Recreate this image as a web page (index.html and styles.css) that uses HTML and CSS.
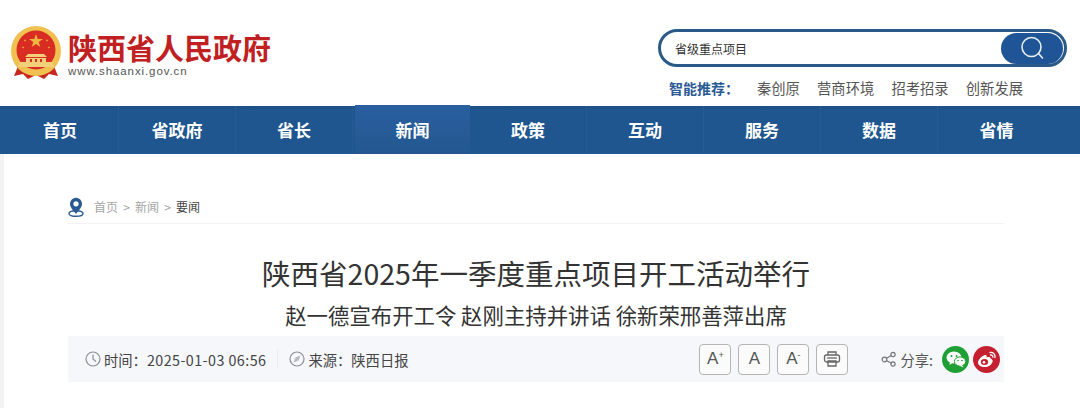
FILE: index.html
```html
<!DOCTYPE html>
<html lang="zh-CN">
<head>
    <meta charset="UTF-8">
    <title>陕西省2025年一季度重点项目开工活动举行</title>
    <link rel="stylesheet" href="styles.css">
</head>
<body>
    <header class="top">
        <div class="logo">
            <svg class="emblem" width="50" height="54" viewBox="0 0 50 54">
                <path d="M8 38 L3 50 L12 48 L17 53 L25 49 L33 53 L38 48 L47 50 L42 38 Z" fill="#c9281f"/>
                <path d="M12 42 L18 48 M25 42 V49 M38 42 L32 48" stroke="#e8b040" stroke-width="2"/>
                <circle cx="25" cy="25" r="25" fill="#f0c050"/>
                <circle cx="25" cy="24" r="19.500" fill="#d92c22"/>
                <path d="M25 8 l1.700 5 h5.300 l-4.300 3.100 1.600 5 -4.300 -3 -4.300 3 1.600 -5 -4.300 -3.100 h5.300 Z" fill="#eeb640"/>
                <path d="M14 13 l1 2.600 -2.400 -1.600 h2.900 l-2.400 1.600 Z M36 13 l1 2.600 -2.400 -1.600 h2.900 l-2.400 1.600 Z M12 20 l1 2.600 -2.400 -1.600 h2.900 l-2.400 1.600 Z M38 20 l1 2.600 -2.400 -1.600 h2.900 l-2.400 1.600 Z" fill="#eeb640"/>
                <path d="M17 28 H33 L36 31 H14 Z M15 32 H35 V36 H15 Z M9 36 H41 L43 41 H7 Z" fill="#f2d07a"/>
                <path d="M19 33 h2 v3 h-2 Z M24 33 h2 v3 h-2 Z M29 33 h2 v3 h-2 Z" fill="#d92c22"/>
            </svg>
            <div>
                <div class="logo-name">陕西省人民政府</div>
                <div class="logo-url">www.shaanxi.gov.cn</div>
            </div>
        </div>
        <div class="top-right">
            <div class="search">
                <span class="search-text">省级重点项目</span>
                <div class="search-btn">
                    <svg width="26" height="26" viewBox="0 0 26 26" fill="none" stroke="#e8eef5" stroke-width="1.600">
                        <circle cx="12.500" cy="12" r="9.500"/>
                        <path d="M19.500 18.500 L23.500 23" stroke-linecap="round"/>
                    </svg>
                </div>
            </div>
            <div class="recommend">
                <b>智能推荐：</b>
                <a>秦创原</a>
                <a>营商环境</a>
                <a>招考招录</a>
                <a>创新发展</a>
            </div>
        </div>
    </header>

    <nav class="nav">
        <a>首页</a>
        <a>省政府</a>
        <a>省长</a>
        <a class="active">新闻</a>
        <a>政策</a>
        <a>互动</a>
        <a>服务</a>
        <a>数据</a>
        <a>省情</a>
    </nav>

    <div class="page">
        <div class="crumb">
            <svg width="16" height="20" viewBox="0 0 16 20" fill="none">
                <ellipse cx="8" cy="16.500" rx="7" ry="2.800" stroke="#2a5a94" stroke-width="1.400"/>
                <path d="M8 17 C4.500 12.500 2 10.200 2 6.800 a6 6 0 0 1 12 0 C14 10.200 11.500 12.500 8 17 Z" fill="#2a5a94"/>
                <circle cx="8" cy="6.800" r="2.600" fill="#fff"/>
            </svg>
            <span>首页 &gt; 新闻 &gt; <em>要闻</em></span>
        </div>

        <h1>陕西省2025年一季度重点项目开工活动举行</h1>
        <h2>赵一德宣布开工令 赵刚主持并讲话 徐新荣邢善萍出席</h2>

        <div class="meta">
            <div class="meta-left">
                <svg width="16" height="16" viewBox="0 0 16 16" fill="none" stroke="#8a8f98" stroke-width="1.200">
                    <circle cx="8" cy="8" r="7"/>
                    <path d="M8 3.500 V8 L11 10.500"/>
                </svg>
                <span>时间：<span class="date">2025-01-03 06:56</span></span>
                <i class="sep"></i>
                <svg width="16" height="16" viewBox="0 0 16 16" fill="none" stroke="#8a8f98" stroke-width="1.200">
                    <circle cx="8" cy="8" r="7"/>
                    <path d="M11.500 4.500 L9.500 9.500 L4.500 11.500 L6.500 6.500 Z" fill="#b5b9c0" stroke="none"/>
                </svg>
                <span>来源：陕西日报</span>
            </div>
            <div class="meta-right">
                <button class="tool">A<sup>+</sup></button>
                <button class="tool">A</button>
                <button class="tool">A<sup>-</sup></button>
                <button class="tool">
                    <svg width="18" height="18" viewBox="0 0 18 18" fill="none" stroke="#666" stroke-width="1.300">
                        <path d="M5 5 V2 H13 V5"/>
                        <rect x="1.500" y="5" width="15" height="7" rx="2"/>
                        <path d="M4 8 H14"/>
                        <path d="M5 11 H13 V16 H5 Z"/>
                    </svg>
                </button>
                <div class="share">
                    <svg width="16" height="16" viewBox="0 0 16 16" fill="none" stroke="#777" stroke-width="1.200">
                        <circle cx="3.500" cy="8.500" r="2.300"/>
                        <circle cx="12" cy="3.500" r="2.100"/>
                        <circle cx="12" cy="13" r="2.100"/>
                        <path d="M5.600 7.300 L10.200 4.600 M5.600 9.700 L10.200 12"/>
                    </svg>
                    <span>分享:</span>
                    <div class="circle wechat">
                        <svg width="20" height="17" viewBox="0 0 20 17" fill="#fff">
                            <ellipse cx="8" cy="6.500" rx="7.500" ry="6"/>
                            <path d="M4 10 L3.500 14 L8 11 Z"/>
                            <ellipse cx="14" cy="10.500" rx="5.600" ry="4.600" stroke="#1fa035" stroke-width="1"/>
                            <path d="M16 14 L17.500 16.500 L13 14.500 Z"/>
                            <circle cx="5.500" cy="5" r="1" fill="#1fa035"/>
                            <circle cx="10.500" cy="5" r="1" fill="#1fa035"/>
                            <circle cx="12" cy="9.500" r=".8" fill="#1fa035"/>
                            <circle cx="16" cy="9.500" r=".8" fill="#1fa035"/>
                        </svg>
                    </div>
                    <div class="circle weibo">
                        <svg width="20" height="17" viewBox="0 0 20 17">
                            <path d="M8 16 C3.500 16 1 14 1 11.500 C1 8.500 5.500 4.500 8 4 C9.800 3.800 10 5.200 9.600 6.500 C11.500 5.800 13.500 5.800 13.500 7.500 C15.500 8.300 16 9.500 15.500 11 C14.500 14 11 16 8 16 Z" fill="#fff"/>
                            <ellipse cx="7.500" cy="11" rx="3.700" ry="3" fill="#c4202f"/>
                            <circle cx="7" cy="11.200" r="1.300" fill="#fff"/>
                            <path d="M13 1.500 C16 1 18.500 3 18 6.500 M13.500 4 C15 3.800 16 4.800 15.800 6.200" fill="none" stroke="#fff" stroke-width="1.300" stroke-linecap="round"/>
                        </svg>
                    </div>
                </div>
            </div>
        </div>
    </div>
</body>
</html>
```

FILE: styles.css
```css
html, body {
    margin: 0;
    padding: 0;
    height: 408px;
    overflow: hidden;
}
body {
    font-family: "Noto Sans CJK SC", "Liberation Sans", sans-serif;
    background-color: #fff;
    color: #333;
}
.top {
    height: 106px;
    box-sizing: border-box;
    display: flex;
    justify-content: space-between;
    padding: 26px 13px 0 11px;
}
.logo {
    display: flex;
    gap: 7px;
    height: 56px;
}
.logo-name {
    font-size: 29px;
    line-height: 30px;
    margin-top: 6px;
    font-weight: 700;
    color: #c0201f;
}
.logo-url {
    font-family: "Liberation Sans", sans-serif;
    font-size: 11.500px;
    line-height: 14px;
    margin-top: 2px;
    letter-spacing: .9px;
    color: #555;
}
.top-right {
    width: 409px;
}
.search {
    height: 38px;
    margin-top: 3px;
    box-sizing: border-box;
    border: 3px solid #2b5a88;
    border-radius: 19px;
    display: flex;
    align-items: center;
    justify-content: space-between;
    padding: 0 1px 0 14px;
}
.search-text {
    font-size: 12px;
    color: #333;
}
.search-btn {
    width: 62px;
    height: 31px;
    border-radius: 16px;
    background-color: #1f5596;
    display: flex;
    align-items: center;
    justify-content: center;
}
.recommend {
    display: flex;
    align-items: center;
    margin-top: 10px;
    padding-left: 11px;
    font-size: 14.300px;
    line-height: 22px;
    color: #555;
}
.recommend b {
    width: 88px;
    font-size: 14px;
    color: #2a5a94;
}
.recommend a {
    margin-right: 17.200px;
}
.nav {
    height: 48px;
    padding-left: 2px;
    display: flex;
    background: linear-gradient(#1c4f88, #20568f 12%, #20568f);
}
.nav a {
    width: 117px;
    box-sizing: border-box;
    border-right: 1px solid #255b94;
    text-align: center;
    font-size: 17px;
    font-weight: 700;
    line-height: 48px;
    color: #fff;
}
.nav a:last-child {
    border-right: 0;
}
.nav a.active {
    width: 115px;
    margin-left: 2px;
    border-right: 0;
    height: 49px;
    margin-top: -1px;
    line-height: 50px;
    background: linear-gradient(#2a5fa0, #22588f);
}
.page {
    border-left: 4px solid #f3f3f3;
    height: 254px;
    padding: 0 76px 0 64px;
}
.crumb {
    height: 70px;
    box-sizing: border-box;
    padding: 43px 0 0 0;
    display: flex;
    align-items: flex-start;
    gap: 10px;
    border-bottom: 1px solid #f3f3f3;
    font-size: 12px;
    line-height: 20px;
    word-spacing: 2.500px;
    color: #a5a5a5;
}
.crumb em {
    font-style: normal;
    color: #444;
}
h1 {
    margin: 29px 0 0 0;
    text-align: center;
    font-size: 28.500px;
    line-height: 40px;
    font-weight: 400;
    color: #333;
}
h2 {
    margin: 7px 0 0 0;
    text-align: center;
    font-size: 21.400px;
    line-height: 30px;
    font-weight: 400;
    color: #333;
}
.meta {
    margin-top: 6px;
    height: 46px;
    background-color: #f5f7fb;
    display: flex;
    justify-content: space-between;
    align-items: center;
    padding: 0 4px 0 17px;
    font-size: 14.300px;
    color: #444;
}
.meta-left, .meta-right, .share {
    display: flex;
    align-items: center;
}
.meta-left svg {
    margin-right: 3px;
}
.date {
    letter-spacing: .45px;
}
.sep {
    width: 1px;
    height: 18px;
    background-color: #e9ebef;
    margin: 0 11px;
}
.tool {
    width: 32px;
    height: 31px;
    box-sizing: border-box;
    margin: 0 7px 0 0;
    padding: 0;
    border: 1px solid #b5b5b5;
    border-radius: 4px;
    background-color: #fbfbfc;
    font-family: "Liberation Sans", sans-serif;
    font-size: 17px;
    color: #555;
    display: flex;
    align-items: center;
    justify-content: center;
}
.tool sup {
    font-size: 9px;
    line-height: 0;
    position: relative;
    top: -4px;
}
.share {
    margin-left: 26px;
    gap: 3px;
}
.share span {
    margin-right: 6px;
    color: #555;
}
.circle {
    width: 27px;
    height: 27px;
    border-radius: 50%;
    display: flex;
    align-items: center;
    justify-content: center;
}
.wechat {
    background-color: #1fa035;
}
.weibo {
    margin-left: 1px;
    background-color: #c4202f;
}
```
